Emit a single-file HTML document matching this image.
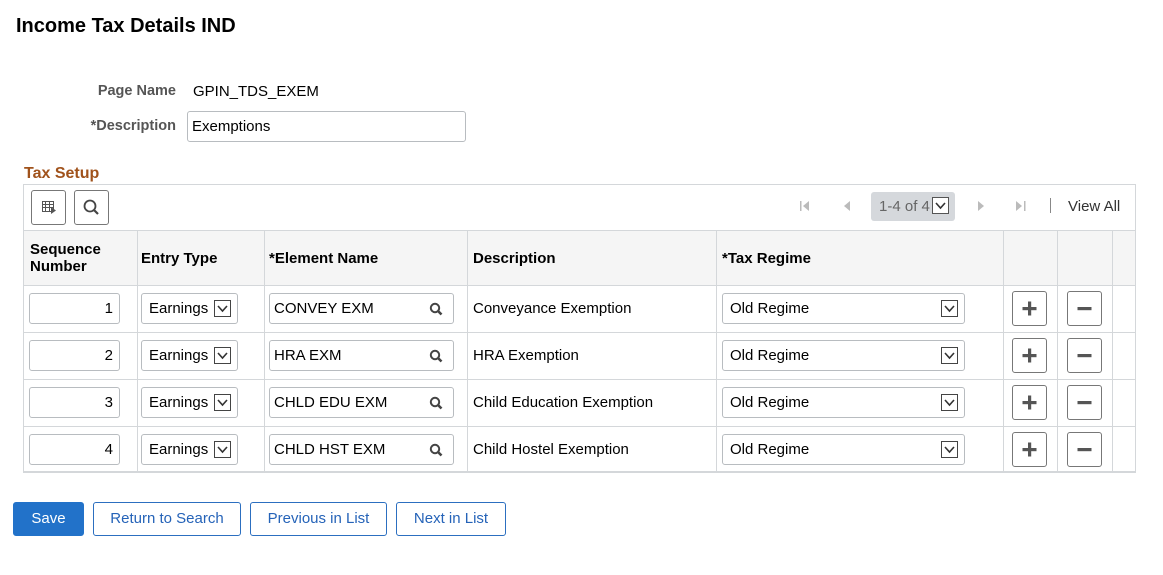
<!DOCTYPE html>
<html><head><meta charset="utf-8"><style>
body{margin:0;width:1163px;height:575px;background:#fff;font-family:"Liberation Sans",Arial,sans-serif;position:relative;overflow:hidden;color:#000}
.a{position:absolute}
.lbl{font-size:14.5px;font-weight:bold;color:#555;text-align:right}
.inp{position:absolute;border:1px solid #b8bcc0;border-radius:3px;background:#fff;box-sizing:border-box;font-size:15px;color:#000;line-height:30px}
.dd{position:absolute;right:6px;top:6px;width:17px;height:17px;border:1px solid #444;box-sizing:border-box;background:#fff}
.dd svg{display:block}
.th{font-size:15px;font-weight:bold;color:#000}
.vl{position:absolute;width:1px;background:#d4d7da}
.hl{position:absolute;height:1px;background:#d4d7da;left:24px;width:1111px}
.btnsq{position:absolute;width:33px;height:33px;border:1px solid #777;border-radius:3px;box-sizing:border-box;background:#fff}
.b{position:absolute;top:502px;height:34px;box-sizing:border-box;border:1px solid #2c6fc0;border-radius:3px;font-size:15px;color:#2563b8;text-align:center;line-height:31px;background:#fff}
</style></head><body>
<div class="a" style="left:16px;top:15px;font-size:20px;font-weight:bold">Income Tax Details IND</div>
<div class="a lbl" style="left:60px;width:116px;top:83px">Page Name</div>
<div class="a" style="left:193px;top:83px;font-size:15px">GPIN_TDS_EXEM</div>
<div class="a lbl" style="left:60px;width:116px;top:118px">*Description</div>
<div class="inp" style="left:187px;top:111px;width:279px;height:31px;padding-left:4px">Exemptions</div>
<div class="a" style="left:24px;top:165px;font-size:16px;font-weight:bold;color:#a0521b">Tax Setup</div>

<div class="a" style="left:23px;top:184px;width:1113px;height:289px;border:1px solid #d4d7da;border-bottom:2px solid #d4d7da;box-sizing:border-box"></div>
<div class="a" style="left:24px;top:231px;width:1111px;height:54px;background:#f5f5f5"></div>
<div class="hl" style="top:230px"></div>
<div class="hl" style="top:285px"></div>
<div class="hl" style="top:332px"></div>
<div class="hl" style="top:379px"></div>
<div class="hl" style="top:426px"></div>
<div class="vl" style="left:137px;top:231px;height:241px"></div>
<div class="vl" style="left:264px;top:231px;height:241px"></div>
<div class="vl" style="left:467px;top:231px;height:241px"></div>
<div class="vl" style="left:716px;top:231px;height:241px"></div>
<div class="vl" style="left:1003px;top:231px;height:241px"></div>
<div class="vl" style="left:1057px;top:231px;height:241px"></div>
<div class="vl" style="left:1112px;top:231px;height:241px"></div>

<div class="btnsq" style="left:31px;top:190px;width:35px;height:35px"><svg width="33" height="33"><g fill="none" stroke="#555" stroke-width="1"><rect x="10.5" y="10.5" width="11" height="10"/><line x1="10" y1="13.5" x2="22" y2="13.5"/><line x1="10" y1="16.5" x2="22" y2="16.5"/><line x1="13.5" y1="11" x2="13.5" y2="21"/><line x1="17.5" y1="11" x2="17.5" y2="21"/></g><path d="M19 16 L24 19.5 L19 23 Z" fill="#555"/></svg></div>
<div class="btnsq" style="left:74px;top:190px;width:35px;height:35px"><svg width="33" height="33"><circle cx="15" cy="15" r="5.5" fill="none" stroke="#444" stroke-width="1.8"/><line x1="19" y1="19" x2="23" y2="23" stroke="#444" stroke-width="2.2"/></svg></div>
<svg class="a" style="left:798px;top:199px" width="14" height="14"><rect x="2" y="2" width="1.5" height="10" fill="#bbb"/><path d="M11 2 L5 7 L11 12Z" fill="#bbb"/></svg>
<svg class="a" style="left:840px;top:199px" width="14" height="14"><path d="M10 2 L4 7 L10 12Z" fill="#bbb"/></svg>
<div class="a" style="left:871px;top:192px;width:84px;height:29px;background:#d5d8dc;border-radius:3px"></div>
<div class="a" style="left:879px;top:198px;font-size:15px;color:#666">1-4 of 4</div>
<div class="a" style="left:932px;top:197px;width:17px;height:17px;border:1px solid #555;box-sizing:border-box;background:#fff"><svg width="15" height="15"><path d="M3 5 L7.5 10 L12 5" fill="none" stroke="#333" stroke-width="1.6"/></svg></div>
<svg class="a" style="left:974px;top:199px" width="14" height="14"><path d="M4 2 L10 7 L4 12Z" fill="#bbb"/></svg>
<svg class="a" style="left:1014px;top:199px" width="14" height="14"><path d="M2 2 L8 7 L2 12Z" fill="#bbb"/><rect x="10" y="2" width="1.5" height="10" fill="#bbb"/></svg>
<div class="a" style="left:1050px;top:198px;width:1px;height:15px;background:#888"></div>
<div class="a" style="left:1068px;top:198px;font-size:15px;color:#333">View All</div>

<div class="a th" style="left:30px;top:241px;line-height:17px">Sequence<br>Number</div>
<div class="a th" style="left:141px;top:250px">Entry Type</div>
<div class="a th" style="left:269px;top:250px">*Element Name</div>
<div class="a th" style="left:473px;top:250px">Description</div>
<div class="a th" style="left:722px;top:250px">*Tax Regime</div>

<div id="rows"></div>
<script>
var ys=[293,340,387,434],el=["CONVEY EXM","HRA EXM","CHLD EDU EXM","CHLD HST EXM"],ds=["Conveyance Exemption","HRA Exemption","Child Education Exemption","Child Hostel Exemption"];
var dd='<div class="dd"><svg width="15" height="15"><path d="M3 5 L7.5 10 L12 5" fill="none" stroke="#333" stroke-width="1.6"/></svg></div>';
var h='';
for(var i=0;i<4;i++){var y=ys[i];
h+='<div class="inp" style="left:29px;top:'+y+'px;width:91px;height:31px;text-align:right;padding-right:6px">'+(i+1)+'</div>';
h+='<div class="inp" style="left:141px;top:'+y+'px;width:97px;height:31px;padding-left:7px">Earnings'+dd+'</div>';
h+='<div class="inp" style="left:269px;top:'+y+'px;width:185px;height:31px;padding-left:4px">'+el[i]+'<svg style="position:absolute;right:9px;top:8px" width="15" height="15"><circle cx="6" cy="6" r="4.2" fill="none" stroke="#444" stroke-width="2"/><line x1="9" y1="9" x2="12.5" y2="12.5" stroke="#444" stroke-width="2.6"/></svg></div>';
h+='<div class="a" style="left:473px;top:'+(y+7)+'px;font-size:15px">'+ds[i]+'</div>';
h+='<div class="inp" style="left:722px;top:'+y+'px;width:243px;height:31px;padding-left:7px">Old Regime'+dd+'</div>';
h+='<div class="btnsq" style="left:1012px;top:'+(y-2)+'px;width:35px;height:35px"><svg width="33" height="33"><rect x="9.5" y="15" width="14" height="3.2" fill="#555"/><rect x="15" y="9.5" width="3.2" height="14" fill="#555"/></svg></div>';
h+='<div class="btnsq" style="left:1067px;top:'+(y-2)+'px;width:35px;height:35px"><svg width="33" height="33"><rect x="9.5" y="15" width="14" height="3.2" fill="#555"/></svg></div>';
}
document.getElementById('rows').innerHTML=h;
</script>

<div class="b" style="left:13px;width:71px;background:#2272c9;border-color:#2272c9;color:#fff">Save</div>
<div class="b" style="left:93px;width:148px">Return to Search</div>
<div class="b" style="left:250px;width:137px">Previous in List</div>
<div class="b" style="left:396px;width:110px">Next in List</div>
</body></html>
